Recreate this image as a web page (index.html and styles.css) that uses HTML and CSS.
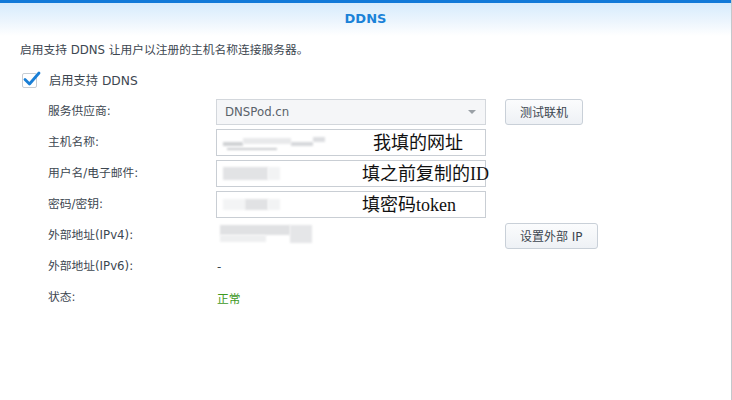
FILE: index.html
```html
<!DOCTYPE html>
<html lang="zh-CN">
<head>
<meta charset="utf-8">
<title>DDNS</title>
<link rel="stylesheet" href="styles.css">
</head>
<body>
<div class="dialog">
  <div class="header"><span class="title">DDNS</span></div>
  <p class="desc">启用支持 DDNS 让用户以注册的主机名称连接服务器。</p>
  <label class="check-row">
    <span class="checkbox">
      <svg width="20" height="18" viewBox="0 0 20 18"><path d="M3 9.5 L7.5 14 L17 3" fill="none" stroke="#1a7fd6" stroke-width="2.8" stroke-linecap="round" stroke-linejoin="round"/></svg>
    </span>
    <span class="check-label">启用支持 DDNS</span>
  </label>

  <div class="form">
    <div class="label">服务供应商:</div>
    <div class="field select"><span>DNSPod.cn</span><span class="arrow"></span></div>
    <div class="action"><button class="btn">测试联机</button></div>

    <div class="label">主机名称:</div>
    <div class="field input">
      <span class="blur b1"></span><span class="blur b2"></span><span class="blur b3"></span><span class="blur b4"></span><span class="blur b5"></span>
      <span class="note n1">我填的网址</span>
    </div>
    <div class="action"></div>

    <div class="label">用户名/电子邮件:</div>
    <div class="field input">
      <span class="blur u1"></span><span class="blur u2"></span>
      <span class="note n2">填之前复制的ID</span>
    </div>
    <div class="action"></div>

    <div class="label">密码/密钥:</div>
    <div class="field input">
      <span class="blur p1"></span><span class="blur p2"></span><span class="blur p3"></span>
      <span class="note n2">填密码token</span>
    </div>
    <div class="action"></div>

    <div class="label">外部地址(IPv4):</div>
    <div class="field plain">
      <span class="blur i1"></span><span class="blur i2"></span><span class="blur i3"></span>
    </div>
    <div class="action"><button class="btn">设置外部 IP</button></div>

    <div class="label">外部地址(IPv6):</div>
    <div class="field plain"><span class="value">-</span></div>
    <div class="action"></div>

    <div class="label">状态:</div>
    <div class="field plain"><span class="value ok">正常</span></div>
    <div class="action"></div>
  </div>
</div>
</body>
</html>
```

FILE: styles.css
```css
html, body {
  margin: 0;
  padding: 0;
  background: #ffffff;
}
body {
  width: 732px;
  height: 400px;
  overflow: hidden;
  font-family: "DejaVu Sans", "Noto Sans CJK SC", sans-serif;
  font-size: 11.75px;
  color: #3c4650;
}
.dialog {
  width: 731px;
  height: 400px;
  border-right: 1px solid #c4c7cb;
}
.header {
  height: 33px;
  border-top: 3px solid #1179d8;
  background: linear-gradient(to bottom, #d6ebfc 0%, #ecf5fd 55%, #ffffff 100%);
  display: flex;
  justify-content: center;
  align-items: center;
}
.title {
  font-weight: bold;
  font-size: 13px;
  color: #1a82d8;
  margin-top: -2px;
}
.desc {
  margin: 6px 0 0 20px;
  line-height: 16px;
}
.check-row {
  display: flex;
  align-items: center;
  margin: 12px 0 0 22px;
  height: 20px;
}
.check-label {
  font-size: 12.25px;
}
.checkbox {
  width: 15px;
  height: 15px;
  border: 1px solid #c8cdd3;
  border-radius: 2px;
  margin-right: 12px;
  position: relative;
  box-sizing: border-box;
}
.checkbox svg {
  position: absolute;
  left: -1px;
  top: -4px;
}
.form {
  margin: 8px 0 0 48px;
  display: grid;
  grid-template-columns: 168px 270px auto;
  grid-auto-rows: 27px;
  row-gap: 4px;
  align-items: center;
}
.label {
  line-height: 27px;
}
.field {
  height: 27px;
  box-sizing: border-box;
  position: relative;
  display: flex;
  align-items: center;
}
.select {
  border: 1px solid #d3d7dc;
  background: #f5f6f8;
  padding: 0 8px;
  justify-content: space-between;
  color: #5a626a;
  height: 26px;
}
.arrow {
  width: 0;
  height: 0;
  border-left: 4px solid transparent;
  border-right: 4px solid transparent;
  border-top: 4px solid #9aa0a6;
  margin-right: 1px;
}
.input {
  border: 1px solid #c9ced4;
  background: #ffffff;
}
.plain {
  padding-left: 1px;
}
.value {
  color: #3c4650;
}
.ok {
  color: #3e9a1f;
}
.action {
  padding-left: 19px;
  height: 27px;
  display: flex;
  align-items: center;
}
.btn {
  height: 26px;
  padding: 0 14px;
  border: 1px solid #c9d0d8;
  border-radius: 3px;
  background: linear-gradient(to bottom, #fbfcfd, #eef1f5);
  font-family: "DejaVu Sans", "Noto Sans CJK SC", sans-serif;
  font-size: 12px;
  color: #3c4650;
}
.blur {
  position: absolute;
  background: #d8d8d8;
  filter: blur(1.2px);
}
.b1 { left: 6px; top: 12px; width: 20px; height: 4px; background: #cfd1d4; }
.b2 { left: 26px; top: 8px; width: 48px; height: 6px; background: #e8e9eb; }
.b3 { left: 74px; top: 12px; width: 22px; height: 4px; background: #d6d8db; }
.b4 { left: 96px; top: 7px; width: 12px; height: 5px; background: #dcdee1; }
.b5 { left: 10px; top: 18px; width: 50px; height: 2px; background: #c9cbce; }
.u1 { left: 6px; top: 6px; width: 45px; height: 13px; background: #e2e3e5; }
.u2 { left: 51px; top: 6px; width: 12px; height: 13px; background: #f2f3f4; }
.p1 { left: 6px; top: 7px; width: 22px; height: 11px; background: #f3f4f5; }
.p2 { left: 28px; top: 7px; width: 23px; height: 11px; background: #e1e2e4; }
.p3 { left: 51px; top: 7px; width: 12px; height: 11px; background: #f2f3f4; }
.i1 { left: 4px; top: 3px; width: 70px; height: 10px; background: #e0e1e3; }
.i2 { left: 74px; top: 3px; width: 22px; height: 18px; background: #e5e6e8; }
.i3 { left: 4px; top: 13px; width: 46px; height: 7px; background: #eeeff0; }
.note {
  position: absolute;
  top: 2px;
  font-family: "Liberation Serif", "Noto Sans CJK SC", serif;
  font-size: 18px;
  line-height: 22px;
  color: #111111;
  white-space: nowrap;
}
.n1 { left: 156px; }
.n2 { left: 145px; }
```
